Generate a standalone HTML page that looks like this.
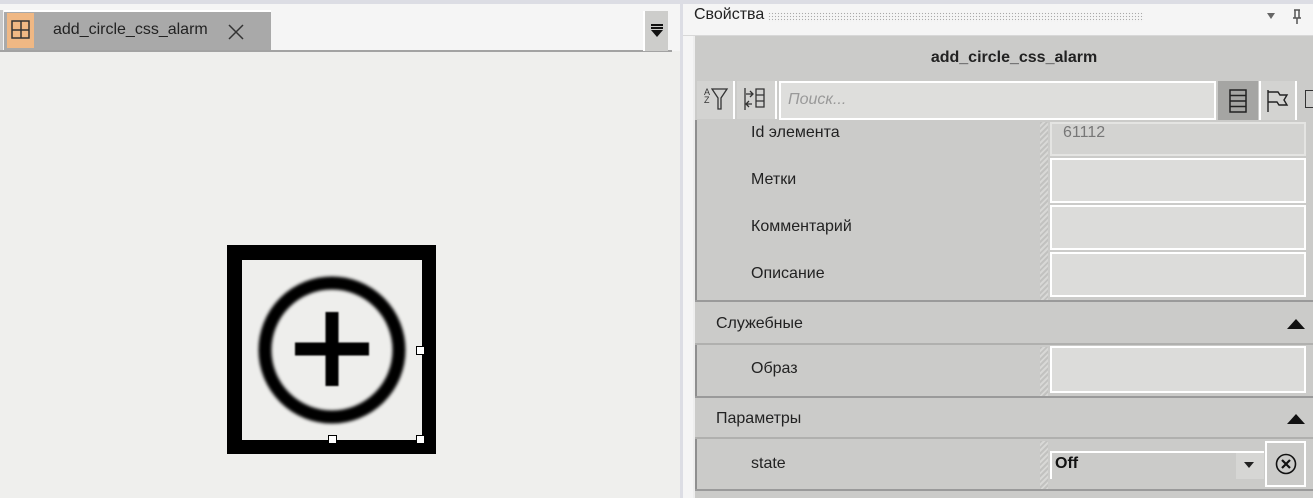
<!DOCTYPE html>
<html><head><meta charset="utf-8"><style>
*{margin:0;padding:0;box-sizing:border-box}
body{width:1313px;height:498px;overflow:hidden;background:#efefed;font-family:"Liberation Sans","DejaVu Sans",sans-serif;position:relative}
.a{position:absolute}
.lbl{position:absolute;left:751px;font-size:16px;color:#222}
.val{position:absolute;left:1050px;width:256px;background:#dcdcda;border:2px solid #fff}
.sec{position:absolute;left:695px;width:618px;background:#cbcbc9;border-top:2px solid #9a9a9a;border-bottom:2px solid #b0b0ae;font-size:16px;color:#222}
.tri{position:absolute;right:8px;width:0;height:0;border-left:9px solid transparent;border-right:9px solid transparent;border-bottom:10px solid #111}
.split{position:absolute;left:1040px;width:8px;background:repeating-linear-gradient(135deg,#c2c2c0 0 2px,#d8d8d6 2px 4px)}
</style></head><body>
<div class="a" style="left:0;top:0;width:1313px;height:4px;background:#dcdde4"></div>
<div class="a" style="left:0;top:4px;width:680px;height:47px;background:#f5f5f5"></div>
<div class="a" style="left:0;top:10px;width:3px;height:40px;background:#c8c8c8"></div>
<div class="a" style="left:4px;top:10px;width:267px;height:40px;background:#a9a9a9;border-top:2px solid #fff"></div>
<div class="a" style="left:7px;top:13px;width:27px;height:35px;background:#f0b884"></div>
<svg class="a" style="left:11px;top:20px" width="20" height="20"><rect x="1" y="1" width="17" height="17" fill="none" stroke="#333" stroke-width="1.5"/><path d="M10 1V18M1 10H18" stroke="#333" stroke-width="1.5"/></svg>
<div class="a" style="left:53px;top:21px;font-size:16px;color:#222">add_circle_css_alarm</div>
<svg class="a" style="left:227px;top:23px" width="18" height="18"><path d="M2 2L16 16M16 2L2 16" stroke="#333" stroke-width="1.5"/></svg>
<div class="a" style="left:0;top:50px;width:672px;height:2px;background:#a3a3a3"></div>
<div class="a" style="left:643px;top:11px;width:25px;height:40px;background:#cdcdcb;border-left:2px solid #fff"></div>
<svg class="a" style="left:650px;top:23px" width="14" height="16"><rect x="1" y="1" width="12" height="2" fill="#111"/><rect x="1" y="4" width="12" height="2" fill="#111"/><path d="M1 7H13L7 14Z" fill="#111"/></svg>
<div class="a" style="left:680px;top:0;width:3px;height:498px;background:#dcdde4"></div>
<div class="a" style="left:683px;top:4px;width:630px;height:494px;background:#f5f5f5"></div>
<div class="a" style="left:683px;top:35px;width:630px;height:1px;background:#d8d8d8"></div>
<div class="a" style="left:694px;top:6px;font-size:16px;color:#222">Свойства</div>
<div class="a" style="left:768px;top:12px;width:376px;height:10px;background:radial-gradient(circle,#aaa 0.7px,transparent 0.8px) 0 0/3px 3px"></div>
<div class="a" style="left:1267px;top:13px;width:0;height:0;border-left:4px solid transparent;border-right:4px solid transparent;border-top:6px solid #666"></div>
<svg class="a" style="left:1292px;top:9px" width="10" height="16"><path d="M2 1H8M3 1V9H7V1M1 9H9M5 9V15" stroke="#555" stroke-width="1.5" fill="none"/></svg>
<div class="a" style="left:693px;top:36px;width:620px;height:462px;background:#cbcbc9;border-left:2px solid #eee"></div>
<div class="a" style="left:695px;top:44px;width:618px;height:36px;background:#cbcbc9;text-align:center;font-size:16px;font-weight:bold;line-height:28px;color:#222;padding-left:20px">add_circle_css_alarm</div>
<div class="a" style="left:697px;top:81px;width:38px;height:38px;background:#d3d3d1;border-right:2px solid #fff"></div>
<div class="a" style="left:737px;top:81px;width:40px;height:38px;background:#d3d3d1;border-right:2px solid #fff"></div>
<div class="a" style="left:704px;top:88px;font-size:9px;line-height:8px;color:#333">A<br>Z</div>
<svg class="a" style="left:711px;top:87px" width="18" height="26"><path d="M1 2H16L10 11V22H7V11Z" fill="none" stroke="#333" stroke-width="1.3"/></svg>
<svg class="a" style="left:743px;top:86px" width="26" height="26"><path d="M2 2V24M3 8H9M7 5L10 8L7 11M3 18H9M6 15L3 18L6 21M13 3H21V21H13ZM13 9H21M13 15H21" stroke="#333" stroke-width="1.3" fill="none"/></svg>
<div class="a" style="left:779px;top:81px;width:437px;height:39px;background:#dededc;border:2px solid #fff"></div>
<div class="a" style="left:788px;top:91px;font-size:16px;font-style:italic;color:#999">Поиск...</div>
<div class="a" style="left:1218px;top:81px;width:40px;height:39px;background:#a5a5a3"></div>
<svg class="a" style="left:1228px;top:88px" width="20" height="26"><path d="M2 2H18V24H2ZM2 7.5H18M2 13H18M2 18.5H18" stroke="#222" stroke-width="1.5" fill="none"/></svg>
<div class="a" style="left:1259px;top:81px;width:38px;height:39px;background:#d3d3d1;border-left:2px solid #fff;border-right:2px solid #fff"></div>
<svg class="a" style="left:1266px;top:89px" width="24" height="24"><path d="M2 1V23M2 3H12L14 6H21L18 11L21 16H13L11 13H2" stroke="#222" stroke-width="1.4" fill="none"/></svg>
<div class="a" style="left:1305px;top:90px;width:8px;height:18px;border:1.5px solid #333;border-right:none"></div>
<div class="a" style="left:695px;top:120px;width:2px;height:182px;background:#8f8f8f"></div>
<div class="split" style="top:122px;height:178px"></div>
<div class="lbl" style="top:124px">Id элемента</div>
<div class="val" style="top:122px;height:34px;background:#d3d3d1;border-color:#e4e4e2"></div>
<div class="a" style="left:1063px;top:124px;font-size:16px;color:#777">61112</div>
<div class="lbl" style="top:171px">Метки</div>
<div class="val" style="top:158px;height:45px"></div>
<div class="lbl" style="top:218px">Комментарий</div>
<div class="val" style="top:205px;height:45px"></div>
<div class="lbl" style="top:265px">Описание</div>
<div class="val" style="top:252px;height:45px"></div>
<div class="sec" style="top:300px;height:45px"><span style="position:absolute;left:21px;top:13px">Служебные</span><div class="tri" style="top:17px"></div></div>
<div class="a" style="left:695px;top:345px;width:2px;height:52px;background:#8f8f8f"></div>
<div class="split" style="top:347px;height:50px"></div>
<div class="lbl" style="top:360px">Образ</div>
<div class="val" style="top:346px;height:47px"></div>
<div class="sec" style="top:396px;height:43px"><span style="position:absolute;left:21px;top:12px">Параметры</span><div class="tri" style="top:16px"></div></div>
<div class="a" style="left:695px;top:439px;width:2px;height:52px;background:#8f8f8f"></div>
<div class="split" style="top:441px;height:48px"></div>
<div class="lbl" style="top:455px">state</div>
<div class="a" style="left:1050px;top:451px;width:214px;height:28px;background:#cbcbc9;border:2px solid #fff;border-bottom:none"></div>
<div class="a" style="left:1236px;top:453px;width:28px;height:26px;background:#d6d6d4"></div>
<div class="a" style="left:1244px;top:462px;width:0;height:0;border-left:5px solid transparent;border-right:5px solid transparent;border-top:6px solid #222"></div>
<div class="a" style="left:1055px;top:455px;font-size:16px;font-weight:bold;color:#111">Off</div>
<div class="a" style="left:1265px;top:441px;width:41px;height:46px;border:2px solid #fff"></div>
<svg class="a" style="left:1275px;top:453px" width="22" height="22"><circle cx="11" cy="11" r="9.5" fill="none" stroke="#111" stroke-width="1.6"/><path d="M7 7L15 15M15 7L7 15" stroke="#111" stroke-width="2.2"/></svg>
<div class="a" style="left:695px;top:489px;width:618px;height:9px;border-top:2px solid #9a9a9a;background:#cbcbc9"></div>
<div class="a" style="left:227px;top:245px;width:209px;height:209px;background:#000"></div>
<div class="a" style="left:242px;top:260px;width:180px;height:180px;background:#eeeeec"></div>
<svg class="a" style="left:242px;top:260px" width="180" height="180"><circle cx="90" cy="90" r="67" fill="none" stroke="#000" stroke-width="13" style="filter:blur(1.5px)"/><path d="M90 52V126M53 89H127" stroke="#000" stroke-width="13" style="filter:blur(0.8px)"/></svg>
<div class="a" style="left:416px;top:346px;width:9px;height:9px;background:#fff;border:1.5px solid #000"></div>
<div class="a" style="left:328px;top:435px;width:9px;height:9px;background:#fff;border:1.5px solid #000"></div>
<div class="a" style="left:416px;top:435px;width:9px;height:9px;background:#fff;border:1.5px solid #000"></div>
</body></html>
